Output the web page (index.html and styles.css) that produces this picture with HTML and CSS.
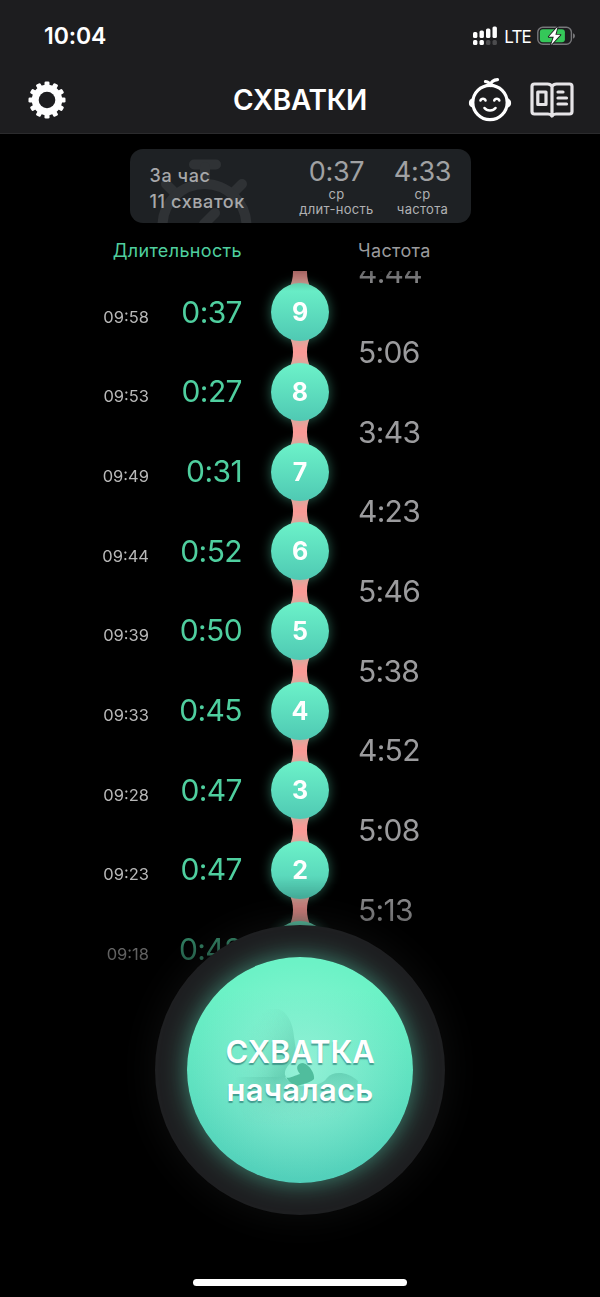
FILE: index.html
```html
<!DOCTYPE html>
<html lang="ru">
<head>
<meta charset="utf-8">
<title>Схватки</title>
<link rel="stylesheet" href="styles.css">
</head>
<body>
<header class="header">
  <div class="status">
    <span class="clock">10:04</span>
    <div class="status-right">
      <svg class="signal" width="25" height="20" viewBox="0 0 25 20" fill="#fff">
        <rect x="0" y="6" width="4.400" height="6" rx="1.500"/><rect x="6.500" y="4.500" width="4.400" height="7.500" rx="1.500"/><rect x="13" y="2.500" width="4.400" height="9.500" rx="1.500"/><rect x="19.500" y="0.500" width="4.400" height="11.500" rx="1.500"/>
        <rect x="0" y="14" width="4.400" height="5" rx="1.500"/><rect x="6.500" y="14" width="4.400" height="5" rx="1.500"/>
        <g fill="#4c4c4e"><rect x="13" y="14" width="4.400" height="5" rx="1.500"/><rect x="19.500" y="14" width="4.400" height="5" rx="1.500"/></g>
      </svg>
      <span class="lte">LTE</span>
      <svg class="battery" width="39" height="20" viewBox="0 0 39 20">
        <rect x=".8" y="1.300" width="33.600" height="17" rx="5" fill="none" stroke="#77777a" stroke-width="1.400"/>
        <rect x="2.900" y="3.300" width="25" height="13" rx="3" fill="#35c759"/>
        <path d="M36 7.200c2.600.8 2.600 4.600 0 5.400z" fill="#77777a"/>
        <path d="M20.600.8 11.800 10.800h5l-2.800 8.200 9.400-10.200h-5z" fill="#fff" stroke="#1d1d1f" stroke-width="1.800" paint-order="stroke" stroke-linejoin="round"/>
      </svg>
    </div>
  </div>
  <nav class="nav">
    <svg class="gear" width="38" height="38" viewBox="-19 -19 38 38">
      <g fill="#fff"><g id="t"><rect x="-2.500" y="-18.500" width="5" height="37" rx="1.300"/><rect x="-2.500" y="-18.500" width="5" height="37" rx="1.300" transform="rotate(90)"/></g>
      <use href="#t" transform="rotate(30)"/><use href="#t" transform="rotate(60)"/></g>
      <circle r="11.700" fill="none" stroke="#fff" stroke-width="7"/><circle r="8.300" fill="#1d1d1f"/>
    </svg>
    <h1 class="title">СХВАТКИ</h1>
    <div class="nav-right">
      <svg width="44" height="44" viewBox="0 0 44 44" fill="none" stroke="#fff" stroke-width="3.200" stroke-linecap="round" stroke-linejoin="round">
        <circle cx="22" cy="24.500" r="17.200"/>
        <path d="M22 7.500C21.500 5 20 3.800 17.500 3.500M22 7.500C23 4 26 1.800 29.500 1.600"/>
        <path d="M5 21C.5 22 .5 28 5 29zM39 21c4.500 1 4.500 7 0 8z" fill="#fff" stroke-width="1.500"/>
        <path d="M12.500 22.500c.6-2.300 4.400-2.300 5 0M26.300 22.500c.6-2.300 4.400-2.300 5 0M16.500 30c2.500 3.300 8.500 3.300 11 0" stroke-width="2.600"/>
      </svg>
      <svg width="44" height="36" viewBox="0 0 44 36" fill="none" stroke="#e6e4e7" stroke-width="3.200" stroke-linecap="round" stroke-linejoin="round">
        <path d="M22 4.500C20.800 2.500 19.500 2 17.500 2H4.500C2.800 2 2 2.800 2 4.500v25C2 31.200 2.800 32 4.500 32H18c2 0 3 .5 4 2 1-1.500 2-2 4-2h13.500c1.700 0 2.500-.8 2.500-2.500v-25C42 2.800 41.200 2 39.500 2h-13c-2 0-3.300.5-4.500 2.500v29"/>
        <rect x="7.800" y="10" width="8.200" height="12.500"/>
        <path d="M28 10h5M28 16h8.500M28 22h8.500"/>
      </svg>
    </div>
  </nav>
</header>

<section class="card">
  <svg class="watch" width="100" height="73" viewBox="0 0 100 73" fill="none" stroke="#2f3235" stroke-width="10" stroke-linecap="round">
    <path d="M14 15.500H36"/>
    <path d="M-14 35-6 43M62 35l-8 8M25 18v12"/>
    <circle cx="24.500" cy="77" r="42"/>
    <path d="M24 75 35 64"/>
  </svg>
  <div class="summary"><span>За час</span><span>11 схваток</span></div>
  <div class="stat"><b>0:37</b><span>ср</span><span>длит-ность</span></div>
  <div class="stat stat-freq"><b>4:33</b><span>ср</span><span>частота</span></div>
</section>

<div class="labels"><span class="label-dur">Длительность</span><span class="label-freq">Частота</span></div>

<main class="timeline">
  <div class="records">
    <div class="record"><time>09:58</time><span>0:37</span></div>
    <div class="record"><time>09:53</time><span>0:27</span></div>
    <div class="record"><time>09:49</time><span>0:31</span></div>
    <div class="record"><time>09:44</time><span>0:52</span></div>
    <div class="record"><time>09:39</time><span>0:50</span></div>
    <div class="record"><time>09:33</time><span>0:45</span></div>
    <div class="record"><time>09:28</time><span>0:47</span></div>
    <div class="record"><time>09:23</time><span>0:47</span></div>
    <div class="record"><time>09:18</time><span>0:48</span></div>
  </div>
  <div class="chain">
    <svg class="link" viewBox="0 0 26 32"><path id="neck" d="M2 0C4.500 4 6 10 6 16S4.500 28 2 32H24C21.500 28 20 22 20 16S21.500 4 24 0z"/></svg><i class="node">9</i>
    <svg class="link" viewBox="0 0 26 32"><use href="#neck"/></svg><i class="node">8</i>
    <svg class="link" viewBox="0 0 26 32"><use href="#neck"/></svg><i class="node">7</i>
    <svg class="link" viewBox="0 0 26 32"><use href="#neck"/></svg><i class="node">6</i>
    <svg class="link" viewBox="0 0 26 32"><use href="#neck"/></svg><i class="node">5</i>
    <svg class="link" viewBox="0 0 26 32"><use href="#neck"/></svg><i class="node">4</i>
    <svg class="link" viewBox="0 0 26 32"><use href="#neck"/></svg><i class="node">3</i>
    <svg class="link" viewBox="0 0 26 32"><use href="#neck"/></svg><i class="node">2</i>
    <svg class="link" viewBox="0 0 26 32"><use href="#neck"/></svg><i class="node">1</i>
  </div>
  <div class="intervals">
    <span>4:44</span><span>5:06</span><span>3:43</span><span>4:23</span><span>5:46</span><span>5:38</span><span>4:52</span><span>5:08</span><span>5:13</span>
  </div>
</main>

<div class="start-ring">
  <button class="start">
    <svg class="swirl" width="226" height="226" viewBox="0 0 226 226">
      <defs>
        <linearGradient id="a" gradientUnits="userSpaceOnUse" x1="108" y1="118" x2="58" y2="78"><stop offset="0" stop-color="#4fbb9f" stop-opacity=".75"/><stop offset="1" stop-color="#70dfbd" stop-opacity="0"/></linearGradient>
        <linearGradient id="b" gradientUnits="userSpaceOnUse" x1="105" y1="114" x2="112" y2="168"><stop offset="0" stop-color="#4fbb9f" stop-opacity=".7"/><stop offset="1" stop-color="#80e0ca" stop-opacity="0"/></linearGradient>
        <linearGradient id="c" gradientUnits="userSpaceOnUse" x1="48" y1="0" x2="88" y2="0"><stop offset="0" stop-color="#fff" stop-opacity="0"/><stop offset="1" stop-color="#fff"/></linearGradient>
        <mask id="m" maskUnits="userSpaceOnUse" x="0" y="0" width="226" height="226"><rect width="226" height="226" fill="url(#c)"/></mask>
      </defs>
      <g mask="url(#m)">
        <path d="M92 52C102 57 106 68 107 80 108 88 110 95 108 100 104 107 97 110 98 118L98 120H40V52z" fill="url(#a)"/>
        <path d="M40 120H98C106 133 132 132 140 121 146 114 160 114 171 124 168 145 160 160 140 168H60z" fill="url(#b)"/>
      </g>
      <path d="M98 118C98 124 106 119 113 117 108 111 110 106 116 106 123 108 128 117 127 122 125 125 116 127 110 129 104 127 100 123 98 118z" fill="#50bd9d"/>
    </svg>
    <span class="start-text"><span class="start-big">СХВАТКА</span><span class="start-small">началась</span></span>
  </button>
</div>
<div class="home"></div>
</body>
</html>
```
FILE: styles.css
```css
* { box-sizing: border-box; }
body { margin: 0; width: 600px; height: 1297px; overflow: hidden; background: #000; color: #fff; font-family: Inter, "Liberation Sans", sans-serif; display: flex; flex-direction: column; align-items: center; }
svg { display: block; flex: none; }
.header { width: 600px; height: 134px; background: #1d1d1f; border-bottom: 1px solid #2b2b2d; flex: none; }
.status { height: 72px; padding: 0 24px 0 44px; display: flex; justify-content: space-between; align-items: center; }
.clock { font-size: 23px; font-weight: 600; letter-spacing: -.1px; }
.status-right { display: flex; align-items: center; }
.lte { font-size: 17px; font-weight: 400; margin: 0 6px 0 6px; letter-spacing: -.8px; padding-top: 2px; }
.nav { height: 56px; padding: 0 26px 0 28px; display: grid; grid-template-columns: 1fr auto 1fr; align-items: center; }
.title { margin: 0; font-size: 28px; font-weight: 600; letter-spacing: -.3px; transform: translateX(-1px); }
.nav-right { display: flex; justify-content: flex-end; align-items: center; gap: 18px; }

.card { width: 341px; height: 74px; margin-top: 15px; border-radius: 13px; background: #1e2124; flex: none; display: flex; overflow: hidden; position: relative; padding-left: 20px; color: #a7a8aa; }
.watch { position: absolute; left: 50px; top: 0; overflow: visible; }
.summary { position: relative; width: 137px; padding-top: 14px; display: flex; flex-direction: column; font-size: 18px; font-weight: 500; line-height: 26px; letter-spacing: .6px; }
.stat { width: 100px; display: flex; flex-direction: column; align-items: center; font-size: 13px; line-height: 15px; letter-spacing: .3px; padding-top: 7px; color: #b0b1b3; }
.stat b { font-weight: 400; font-size: 27px; line-height: 31px; letter-spacing: -.3px; color: #a0a1a3; }
.stat-freq { width: 72px; }

.labels { width: 600px; height: 48px; padding-top: 15px; flex: none; display: flex; font-size: 18px; line-height: 26px; letter-spacing: .35px; }
.label-dur { width: 242px; text-align: right; color: #4fcf9f; }
.label-freq { margin-left: 116px; color: #9b9b9d; }

.timeline { width: 600px; height: 700px; flex: none; overflow: hidden; display: flex; -webkit-mask-image: linear-gradient(rgba(0,0,0,.65) 0, #000 20px, #000 605px, rgba(0,0,0,.45) 695px); mask-image: linear-gradient(rgba(0,0,0,.65) 0, #000 20px, #000 605px, rgba(0,0,0,.45) 695px); }
.records { width: 242px; padding-top: .7px; flex: none; }
.record { height: 79.700px; display: flex; align-items: center; justify-content: flex-end; font-size: 30px; letter-spacing: -.6px; color: #4fcf9f; }
.record time { font-size: 16.500px; letter-spacing: 0; color: #b8b8b8; padding-top: 10px; }
.record span { width: 93px; text-align: right; }
.chain { width: 58px; margin-left: 29px; flex: none; display: flex; flex-direction: column; align-items: center; margin-top: -9.600px; }
.link { width: 26px; height: 32px; margin: -5.150px 0; fill: #fb9a97; }
.node { width: 58px; height: 58px; flex: none; border-radius: 50%; background: linear-gradient(#6cf2c9, #4fc9b3); box-shadow: 0 0 12px rgba(90,225,185,.45); display: flex; align-items: center; justify-content: center; font: 700 25px Inter, sans-serif; position: relative; }
.intervals { margin: -37.700px 0 0 29px; display: flex; flex-direction: column; font-size: 30px; line-height: 79.700px; letter-spacing: -.7px; color: #9b9b9d; }
.intervals span { height: 79.700px; flex: none; }

.start-ring { width: 290px; height: 290px; margin-top: -46px; border-radius: 50%; background: #1e1f21; box-shadow: 0 0 40px rgba(40,42,44,.35); flex: none; display: flex; align-items: center; justify-content: center; position: relative; }
.start { width: 226px; height: 226px; padding: 0; border: 0; border-radius: 50%; background: radial-gradient(circle at 50% 50%, rgba(165,245,222,.75) 0, rgba(165,245,222,0) 68%), linear-gradient(#6cf2c6 15%, #52cfba); box-shadow: 0 0 24px rgba(90,225,185,.55); display: grid; place-items: center; color: #fff; font-family: Inter, sans-serif; }
.swirl, .start-text { grid-area: 1 / 1; }
.start-text { display: flex; flex-direction: column; align-items: center; font-size: 31px; font-weight: 600; line-height: 38px; text-shadow: 0 2px 1px rgba(40,120,115,.65); padding-top: 2px; }
.start-big { letter-spacing: -.1px; }
.start-small { letter-spacing: .2px; }
.home { width: 214px; height: 7px; margin-top: 64px; border-radius: 4px; background: #fff; flex: none; }
```
